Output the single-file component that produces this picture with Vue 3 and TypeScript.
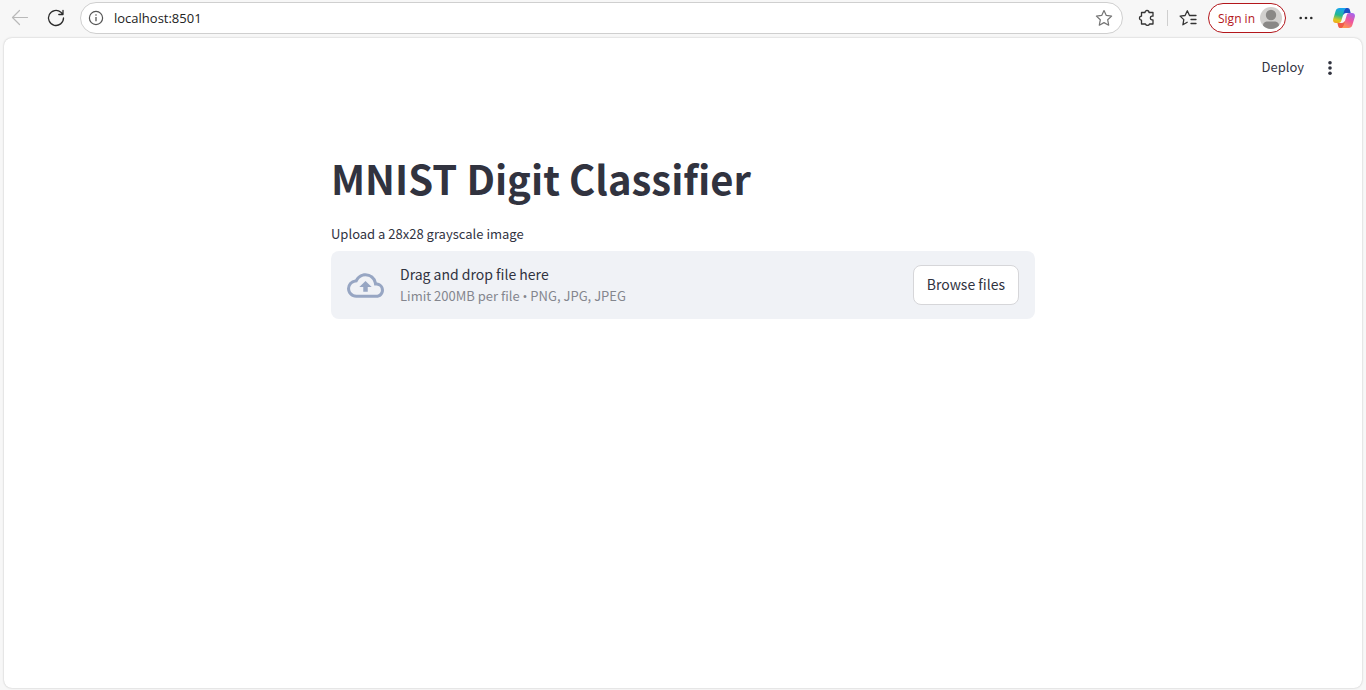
<script setup lang="ts">
import { ref } from 'vue'

const address = ref('localhost:8501')
const fileInput = ref<HTMLInputElement | null>(null)

function openPicker(): void {
  fileInput.value?.click()
}
</script>

<template>
  <div class="browser">
    <header class="toolbar">
      <button class="icon-button" type="button" aria-label="Back" disabled>
        <svg width="20" height="20" viewBox="0 0 20 20" fill="none" stroke="#b9b9b9" stroke-width="1.2" stroke-linecap="round" stroke-linejoin="round">
          <path d="M17.500 9.500H2.500M9.500 2.500L2.500 9.500l7 7" />
        </svg>
      </button>
      <button class="icon-button reload" type="button" aria-label="Reload">
        <svg width="20" height="20" viewBox="0 0 20 20" fill="none" stroke="#2b2b2b" stroke-width="1.300" stroke-linecap="round" stroke-linejoin="round">
          <path d="M17.500 10a7.500 7.500 0 1 1-2.600-5.700L17 6.300M17 2.300v4.200h-4.200" />
        </svg>
      </button>
      <div class="address-bar">
        <svg width="16" height="16" viewBox="0 0 16 16" fill="none" stroke="#555" stroke-width="1.200">
          <circle cx="8" cy="8" r="6.600" />
          <path d="M8 7v4.300" stroke-width="1.300" />
          <circle cx="8" cy="5" r=".8" fill="#555" stroke="none" />
        </svg>
        <input v-model="address" class="address" type="text" aria-label="Address" spellcheck="false" />
        <button class="icon-button" type="button" aria-label="Add to favorites">
          <svg width="18" height="18" viewBox="0 0 18 18" fill="none" stroke="#747474" stroke-width="1.200" stroke-linejoin="round">
            <path d="M9 1.500l2.300 4.900 5.300.7-3.900 3.700 1 5.400L9 13.600l-4.700 2.600 1-5.400L1.400 7.100l5.300-.7z" />
          </svg>
        </button>
      </div>
      <button class="icon-button extensions" type="button" aria-label="Extensions">
        <svg width="18" height="18" viewBox="0 0 18 18" fill="none" stroke="#333" stroke-width="1.300" stroke-linejoin="round">
          <path d="M3.500 3.500H7a2 2 0 0 1 4 0h4v3.700h-1.200a1.900 1.900 0 0 0 0 3.700H15V15h-3.500a2.100 2.100 0 0 1-4 0H3.500v-3.800a2 2 0 0 1 0-4z" />
        </svg>
      </button>
      <span class="divider"></span>
      <button class="icon-button favorites" type="button" aria-label="Favorites">
        <svg width="18" height="18" viewBox="0 0 18 18" fill="none" stroke="#333" stroke-width="1.300" stroke-linejoin="round" stroke-linecap="round">
          <path d="M10.500 6.500L8.300 1.800 6.100 6.500l-5 .6 3.700 3.500-.9 5.200 4.300-2.500M10.500 6.500H17M12 10.500h5M12 14.500h5" />
        </svg>
      </button>
      <button class="sign-in" type="button">
        <span>Sign in</span>
        <svg width="22" height="22" viewBox="0 0 22 22">
          <circle cx="11" cy="11" r="11" fill="#d2d0ce" />
          <circle cx="11" cy="8" r="5.200" fill="#8a8886" />
          <path d="M3 18.500c0-3 2.400-4 4.500-4h7c2.100 0 4.500 1 4.500 4A11 11 0 0 1 3 18.500z" fill="#8a8886" />
        </svg>
      </button>
      <button class="icon-button more" type="button" aria-label="Settings and more">
        <svg width="16" height="16" viewBox="0 0 16 16" fill="#2b2b2b">
          <circle cx="2.700" cy="8" r="1.300" />
          <circle cx="8" cy="8" r="1.300" />
          <circle cx="13.300" cy="8" r="1.300" />
        </svg>
      </button>
      <button class="icon-button" type="button" aria-label="Copilot">
        <svg width="22" height="20" viewBox="0 0 22 20">
          <defs>
            <linearGradient id="cool" x1=".4" y1="0" x2=".2" y2="1">
              <stop offset="0" stop-color="#18a5ee" />
              <stop offset=".45" stop-color="#23b890" />
              <stop offset=".8" stop-color="#dfc91d" />
              <stop offset="1" stop-color="#f2a41b" />
            </linearGradient>
            <linearGradient id="warm" x1=".8" y1="0" x2=".3" y2="1">
              <stop offset="0" stop-color="#a464ef" />
              <stop offset=".5" stop-color="#f0569c" />
              <stop offset="1" stop-color="#ff9650" />
            </linearGradient>
          </defs>
          <path d="M12.500 0h2.200c1.200 0 1.800.8 2.100 1.800l.9 3.200H13c-1.300 0-2 .7-2.400 2L9 4z" fill="#1b4fc4" />
          <path d="M9.500 20H7.300c-1.200 0-1.800-.8-2.100-1.800L4.400 15H9c1.300 0 2-.7 2.400-2l1.600 3z" fill="#ef5b48" />
          <path d="M6.500 0h7c-1.300.4-1.800 1.300-2.200 2.700L8.400 12.600C7.900 14.300 7.200 15 5.500 15H3C.5 15-.4 13.200.2 11l2.500-8.300C3.300.8 4.500 0 6.500 0z" fill="url(#cool)" />
          <path d="M15.500 20h-7c1.300-.4 1.800-1.300 2.200-2.700l2.900-9.900C14.100 5.700 14.800 5 16.500 5H19c2.500 0 3.400 1.800 2.800 4l-2.500 8.300c-.6 1.900-1.800 2.700-3.800 2.700z" fill="url(#warm)" />
        </svg>
      </button>
    </header>

    <div class="page">
      <div class="app-bar">
        <button class="deploy" type="button">Deploy</button>
        <button class="icon-button" type="button" aria-label="Main menu">
          <svg width="20" height="20" viewBox="0 0 20 20" fill="#31333f">
            <circle cx="10" cy="4.700" r="1.800" />
            <circle cx="10" cy="10" r="1.800" />
            <circle cx="10" cy="15.300" r="1.800" />
          </svg>
        </button>
      </div>

      <main class="content">
        <h1>MNIST Digit Classifier</h1>
        <label class="caption" for="image-file">Upload a 28x28 grayscale image</label>
        <section class="dropzone">
          <svg class="cloud" width="37" height="37" viewBox="0 0 24 24" fill="#97a6c3">
            <path d="M19.350 10.040A7.490 7.490 0 0 0 12 4C9.110 4 6.600 5.640 5.350 8.040A5.994 5.994 0 0 0 0 14c0 3.310 2.690 6 6 6h13c2.760 0 5-2.240 5-5 0-2.640-2.050-4.780-4.650-4.960zM19 18H6c-2.210 0-4-1.790-4-4 0-2.050 1.530-3.760 3.560-3.970l1.070-.11.500-.95A5.469 5.469 0 0 1 12 6c2.620 0 4.880 1.860 5.390 4.430l.3 1.500 1.530.11A2.980 2.980 0 0 1 22 15c0 1.650-1.350 3-3 3zM8 13h2.550v3h2.900v-3H16l-4-4z" />
          </svg>
          <div class="hint">
            <span class="hint-title">Drag and drop file here</span>
            <span class="hint-limit">Limit 200MB per file <span class="bullet">•</span> PNG, JPG, JPEG</span>
          </div>
          <input id="image-file" ref="fileInput" class="file" type="file" accept=".png,.jpg,.jpeg" />
          <button class="browse" type="button" @click="openPicker">Browse files</button>
        </section>
      </main>
    </div>
  </div>
</template>

<style>
body {
  margin: 0;
}
</style>

<style scoped>
.browser {
  display: flex;
  flex-direction: column;
  min-height: 100vh;
  box-sizing: border-box;
  padding: 0 4px 2px;
  background: #f7f7f7;
  font-family: "Noto Sans CJK SC", "Noto Sans", sans-serif;
  color: #31333f;
}

button {
  padding: 0;
  border: 0;
  background: none;
  font-family: inherit;
  color: inherit;
}

svg {
  display: block;
  flex: none;
}

.toolbar {
  display: flex;
  align-items: center;
  height: 36px;
  padding: 0 7px 0 6px;
  margin-bottom: 2px;
  font-family: "Open Sans", "Noto Sans", sans-serif;
}

.icon-button {
  display: flex;
  align-items: center;
  justify-content: center;
}

.reload {
  margin: 0 14px 0 16px;
}

.address-bar {
  flex: 1;
  display: flex;
  align-items: center;
  height: 32px;
  box-sizing: border-box;
  padding: 0 9px 0 7px;
  border: 1px solid #cfcfcf;
  border-radius: 16px;
  background: #fff;
}

.address {
  flex: 1;
  min-width: 0;
  margin: 0 0 0 10px;
  padding: 0;
  border: 0;
  outline: 0;
  background: none;
  font-family: inherit;
  font-size: 13px;
  line-height: 20px;
  color: #222;
}

.extensions {
  margin: 0 11px 0 15px;
}

.divider {
  width: 1px;
  height: 16px;
  background: #cfcfcf;
}

.favorites {
  margin: 0 11px;
}

.sign-in {
  display: flex;
  align-items: center;
  justify-content: space-between;
  width: 78px;
  height: 30px;
  box-sizing: border-box;
  padding: 0 3px 0 9px;
  border: 1px solid #b3161b;
  border-radius: 15px;
  background: #fff;
  font-size: 12px;
  color: #b3161b;
}

.more {
  margin: 0 19px 0 12px;
}

.page {
  flex: 1;
  border-radius: 8px;
  background: #fff;
  box-shadow: 0 0 2px rgba(0, 0, 0, 0.25);
}

.app-bar {
  display: flex;
  align-items: center;
  justify-content: flex-end;
  gap: 16px;
  height: 60px;
  padding: 0 22px;
}

.deploy {
  padding-bottom: 2px;
  font-size: 13px;
  line-height: 20px;
}

.content {
  max-width: 704px;
  margin: 0 auto;
  padding: 50px 0 40px;
}

h1 {
  margin: 0;
  font-size: 40px;
  font-weight: 700;
  line-height: 60px;
}

.caption {
  display: block;
  margin: 16px 0 7px;
  font-size: 13px;
  line-height: 20px;
}

.dropzone {
  display: flex;
  align-items: center;
  padding: 12px 16px;
  border-radius: 8px;
  background: #f0f2f6;
}

.cloud {
  margin-right: 16px;
}

.hint {
  flex: 1;
  display: flex;
  flex-direction: column;
  line-height: 22px;
}

.hint-title {
  font-size: 14px;
}

.hint-limit {
  font-size: 13px;
  color: #84868e;
}

.bullet {
  font-family: "Open Sans", "Noto Sans", sans-serif;
  line-height: 1;
}

.file {
  position: absolute;
  width: 1px;
  height: 1px;
  overflow: hidden;
  opacity: 0;
}

.browse {
  height: 40px;
  padding: 0 13px 2px;
  border: 1px solid #d6d6d9;
  border-radius: 8px;
  background: #fff;
  font-size: 14px;
}
</style>
